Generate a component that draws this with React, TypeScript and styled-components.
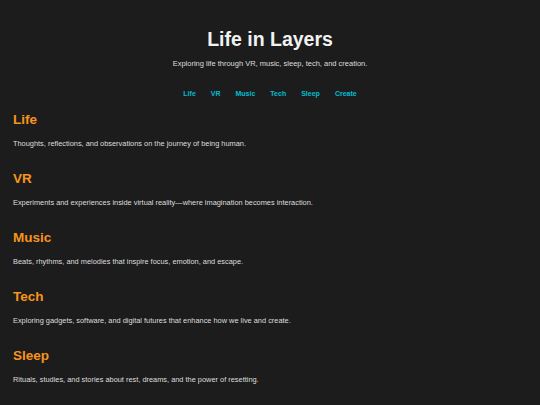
import React from 'react';
import styled, { createGlobalStyle } from 'styled-components';

const GlobalStyle = createGlobalStyle`
  html, body {
    margin: 0;
    padding: 0;
    background: #1c1c1c;
  }
  body {
    font-family: 'Liberation Sans', Arial, sans-serif;
    color: #e6e6e6;
  }
`;

const Page = styled.div`
  width: 540px;
  min-height: 405px;
  background: #1c1c1c;
`;

const Header = styled.header`
  display: flex;
  flex-direction: column;
  align-items: center;
  padding-top: 27px;
`;

const Title = styled.h1`
  margin: 0;
  font-size: 19.5px;
  font-weight: bold;
  color: #f2f2f2;
  line-height: 24px;
`;

const Tagline = styled.p`
  margin: 8px 0 0;
  font-size: 7.5px;
  line-height: 10px;
  color: #dcdcdc;
`;

const Nav = styled.nav`
  display: flex;
  gap: 15px;
  margin-top: 20px;
`;

const NavLink = styled.a`
  font-size: 7px;
  font-weight: bold;
  color: #00bcd4;
  text-decoration: none;
  line-height: 10px;
`;

const Main = styled.main`
  display: flex;
  flex-direction: column;
  gap: 20px;
  padding: 11px 13px 0;
`;

const Section = styled.section`
  display: flex;
  flex-direction: column;
  gap: 9px;
`;

const Heading = styled.h2`
  margin: 0;
  font-size: 13.5px;
  font-weight: bold;
  color: #f7941d;
  line-height: 20px;
`;

const Blurb = styled.p`
  margin: 0;
  font-size: 7.4px;
  line-height: 10px;
  color: #dedede;
`;

const sections = [
  { title: 'Life', text: 'Thoughts, reflections, and observations on the journey of being human.' },
  { title: 'VR', text: 'Experiments and experiences inside virtual reality\u2014where imagination becomes interaction.' },
  { title: 'Music', text: 'Beats, rhythms, and melodies that inspire focus, emotion, and escape.' },
  { title: 'Tech', text: 'Exploring gadgets, software, and digital futures that enhance how we live and create.' },
  { title: 'Sleep', text: 'Rituals, studies, and stories about rest, dreams, and the power of resetting.' },
];

const links = ['Life', 'VR', 'Music', 'Tech', 'Sleep', 'Create'];

export default function App() {
  return (
    <Page>
      <GlobalStyle />
      <Header>
        <Title>Life in Layers</Title>
        <Tagline>Exploring life through VR, music, sleep, tech, and creation.</Tagline>
        <Nav>
          {links.map((l) => (
            <NavLink key={l} href={`#${l.toLowerCase()}`}>
              {l}
            </NavLink>
          ))}
        </Nav>
      </Header>
      <Main>
        {sections.map((s) => (
          <Section key={s.title} id={s.title.toLowerCase()}>
            <Heading>{s.title}</Heading>
            <Blurb>{s.text}</Blurb>
          </Section>
        ))}
      </Main>
    </Page>
  );
}
